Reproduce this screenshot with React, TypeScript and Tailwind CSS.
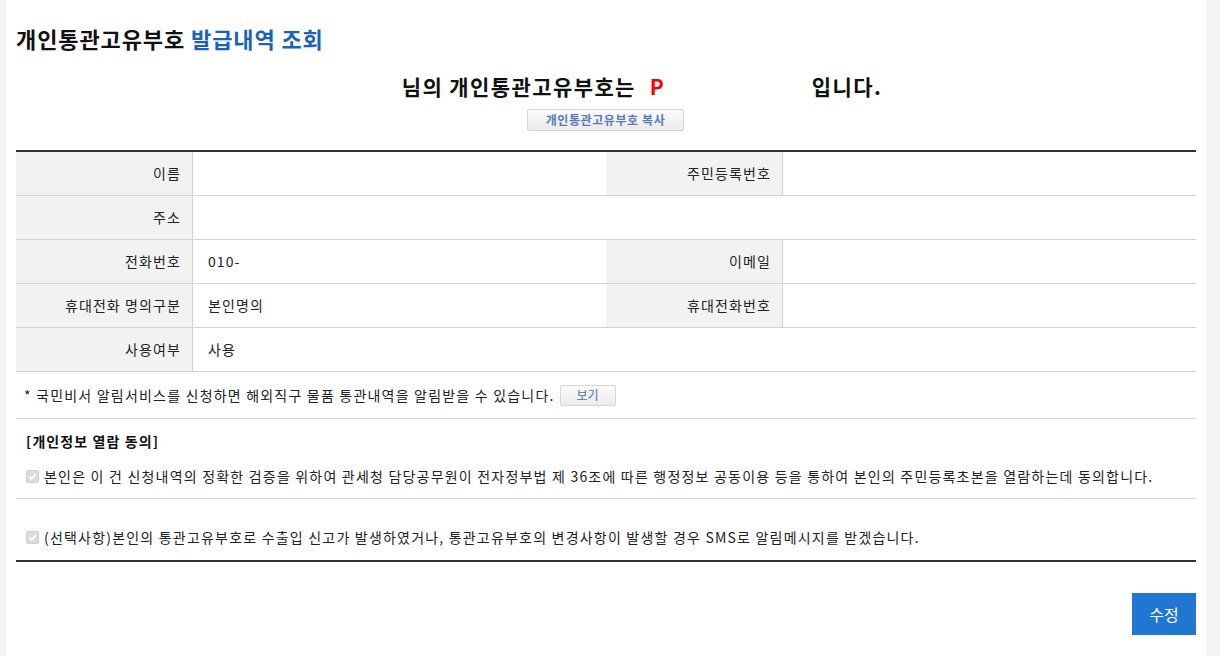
import React from "react";

const font = { fontFamily: '"Noto Sans CJK KR", "Noto Sans", sans-serif' };

const Label = ({ children }: { children?: React.ReactNode }) => (
  <div className="bg-[#f2f2f2] border-r border-[#d4d4d4] flex items-center justify-end pr-[11px] text-[14px] tracking-[1.1px] text-[#222]">
    {children}
  </div>
);

const Value = ({ children }: { children?: React.ReactNode }) => (
  <div className="flex items-center pl-[15px] text-[14px] tracking-[1.1px] text-[#222]">{children}</div>
);

const Check = () => (
  <span className="inline-flex items-center justify-center w-[13px] h-[13px] rounded-[2px] bg-[#dcdcdc] border border-[#cfcfcf] mr-[5px] shrink-0">
    <svg width="9" height="9" viewBox="0 0 10 10">
      <path d="M1.5 5.2 L4 7.6 L8.6 2.4" fill="none" stroke="#ffffff" strokeWidth="1.8" />
    </svg>
  </span>
);

export default function App() {
  return (
    <div className="min-h-screen bg-[#f4f4f4]" style={font}>
      <div className="ml-[6px] w-[1200px] min-h-screen bg-white px-[10px]">
        <h1 className="pt-[24px] h-[65px] text-[22px] font-bold text-[#111] leading-[28px] tracking-[0.9px]">
          개인통관고유부호 <span className="text-[#1b63b6]">발급내역 조회</span>
        </h1>

        <div className="flex flex-col items-center">
          <p className="h-[44px] flex items-center ml-[72px] text-[21px] font-bold text-[#111] tracking-[1.4px]">
            님의 개인통관고유부호는
            <span className="text-[#ff0000] ml-[14px] w-[162px]">P</span>
            입니다.
          </p>
          <button className="h-[22px] w-[157px] -ml-[1px] rounded-[2px] border border-[#d6d6d6] bg-gradient-to-b from-[#fafafa] to-[#ebebeb] text-[12px] font-semibold tracking-[0.6px] text-[#5a7bb8] leading-none">
            개인통관고유부호 복사
          </button>
        </div>

        <div className="mt-[19px] border-t-2 border-[#333]">
          <div className="grid grid-cols-[177px_413px_177px_1fr] h-[44px] border-b border-[#d4d4d4]">
            <Label>이름</Label>
            <Value />
            <Label>주민등록번호</Label>
            <Value />
          </div>
          <div className="grid grid-cols-[177px_1fr] h-[44px] border-b border-[#d4d4d4]">
            <Label>주소</Label>
            <Value />
          </div>
          <div className="grid grid-cols-[177px_413px_177px_1fr] h-[44px] border-b border-[#d4d4d4]">
            <Label>전화번호</Label>
            <Value>010-</Value>
            <Label>이메일</Label>
            <Value />
          </div>
          <div className="grid grid-cols-[177px_413px_177px_1fr] h-[44px] border-b border-[#d4d4d4]">
            <Label>휴대전화 명의구분</Label>
            <Value>본인명의</Value>
            <Label>휴대전화번호</Label>
            <Value />
          </div>
          <div className="grid grid-cols-[177px_1fr] h-[44px] border-b border-[#d4d4d4]">
            <Label>사용여부</Label>
            <Value>사용</Value>
          </div>

          <div className="h-[47px] flex items-center pl-[8px] text-[14px] tracking-[1.2px] text-[#222] border-b border-[#d4d4d4]">
            * 국민비서 알림서비스를 신청하면 해외직구 물품 통관내역을 알림받을 수 있습니다.
            <button className="ml-[5px] h-[21px] w-[56px] rounded-[2px] border border-[#d6d6d6] bg-gradient-to-b from-[#fafafa] to-[#ebebeb] text-[12px] tracking-normal text-[#4a6fb0] leading-none">
              보기
            </button>
          </div>

          <div className="pt-[12px] pl-[10px] text-[14px] font-bold tracking-[1.1px] text-[#111] leading-[20px]">
            [개인정보 열람 동의]
          </div>
          <div className="h-[48px] flex items-center pl-[10px] pt-[4px] text-[14px] tracking-[1.2px] text-[#222] border-b border-[#d4d4d4]">
            <Check />
            본인은 이 건 신청내역의 정확한 검증을 위하여 관세청 담당공무원이 전자정부법 제 36조에 따른 행정정보 공동이용 등을 통하여 본인의 주민등록초본을 열람하는데 동의합니다.
          </div>
          <div className="h-[63px] flex items-center pl-[10px] pt-[15px] text-[14px] tracking-[1.2px] text-[#222] border-b-2 border-[#333]">
            <Check />
            (선택사항)본인의 통관고유부호로 수출입 신고가 발생하였거나, 통관고유부호의 변경사항이 발생할 경우 SMS로 알림메시지를 받겠습니다.
          </div>
        </div>

        <div className="flex justify-end pt-[31px]">
          <button className="h-[42px] w-[64px] bg-[#2176d2] text-white text-[16px]">수정</button>
        </div>
      </div>
    </div>
  );
}
